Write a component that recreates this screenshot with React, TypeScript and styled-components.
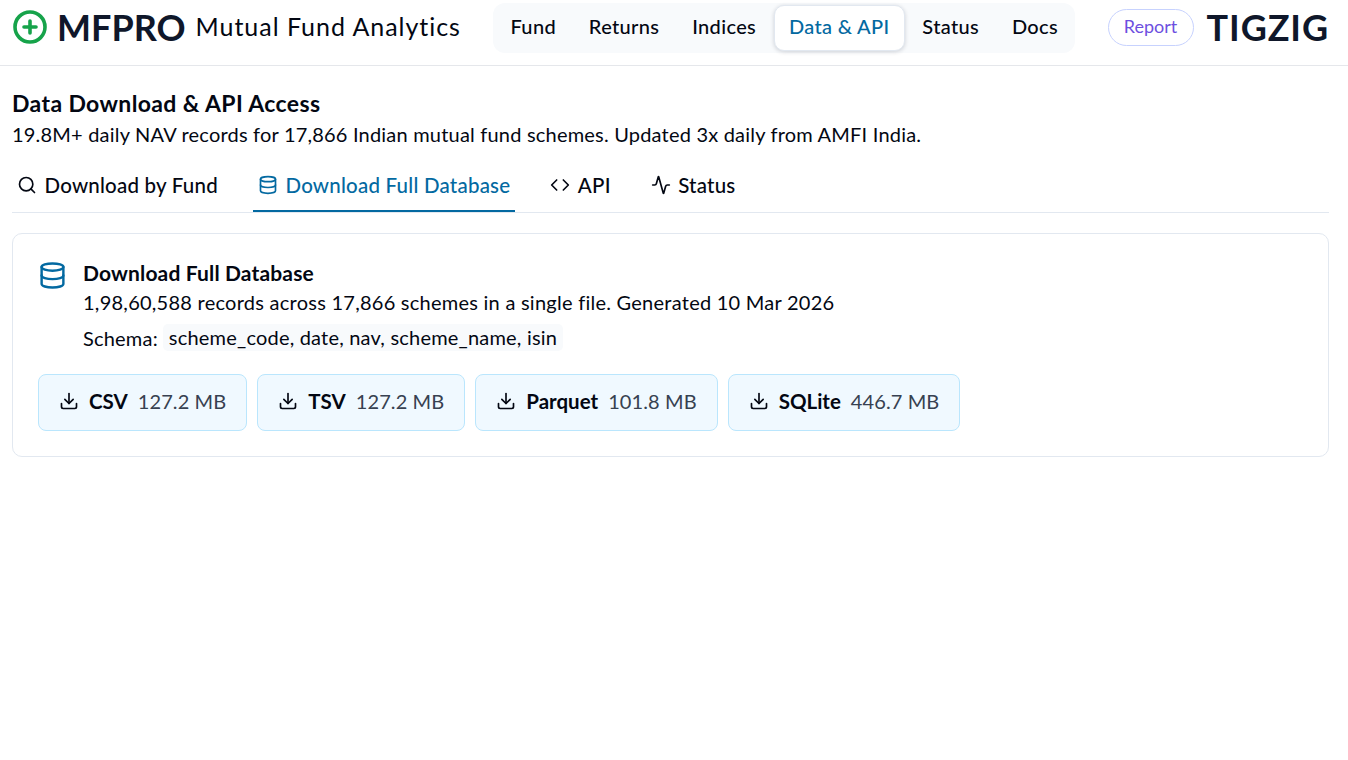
import { createGlobalStyle, styled } from "styled-components";
import { CirclePlus, Code, Activity, Database, Download, Search } from "lucide-react";

const GlobalStyle = createGlobalStyle`
  body {
    margin: 0;
    background: #fff;
    color: #030712;
    font-family: "Lato", "Open Sans", sans-serif;
  }
`;

const Header = styled.header`
  height: 66px;
  box-sizing: border-box;
  border-bottom: 1px solid #e5e7eb;
  display: flex;
  align-items: center;
  justify-content: space-between;
  padding: 0 19px 11px 12px;
`;

const Brand = styled.div`
  display: flex;
  align-items: center;
`;

const BrandIcon = styled(CirclePlus)`
  width: 36px;
  height: 36px;
  color: #16a34a;
  margin-right: 9px;
`;

const BrandName = styled.span`
  font-size: 36px;
  font-weight: 700;
  color: #0f172a;
  margin-right: 10px;
`;

const BrandTag = styled.span`
  font-size: 25px;
  letter-spacing: 0.97px;
  padding-bottom: 2px;
  color: #030712;
`;

const Nav = styled.nav`
  display: flex;
  align-items: center;
  gap: 2px;
  height: 50px;
  padding: 0 2px;
  margin-top: 2px;
  background: #f8fafc;
  border-radius: 12px;
`;

const NavItem = styled.a<{ $active?: boolean }>`
  height: 46px;
  box-sizing: border-box;
  display: flex;
  align-items: center;
  padding: 0 14.4px 4px;
  font-size: 20px;
  font-weight: 500;
  letter-spacing: 0.35px;
  border-radius: 10px;
  color: ${(p) => (p.$active ? "#0369a1" : "#030712")};
  background: ${(p) => (p.$active ? "#fff" : "transparent")};
  border: 1px solid ${(p) => (p.$active ? "#e2e8f0" : "transparent")};
  box-shadow: ${(p) => (p.$active ? "0 1px 4px rgba(15, 23, 42, 0.18)" : "none")};
`;

const RightGroup = styled.div`
  display: flex;
  align-items: center;
  gap: 13px;
`;

const ReportButton = styled.a`
  height: 37px;
  width: 86px;
  box-sizing: border-box;
  border: 1px solid #c7d2fe;
  border-radius: 19px;
  display: flex;
  align-items: center;
  justify-content: center;
  padding-bottom: 2px;
  font-size: 18px;
  color: #6d4fe0;
`;

const TigzigLogo = styled.span`
  font-size: 36px;
  font-weight: 700;
  letter-spacing: 0.9px;
  color: #0f172a;
`;

const Main = styled.main`
  padding: 23px 19px 0 12px;
`;

const PageTitle = styled.h1`
  margin: 0;
  font-size: 23px;
  line-height: 28px;
  font-weight: 700;
  letter-spacing: 0.37px;
  color: #030712;
`;

const PageSub = styled.p`
  margin: 3px 0 0;
  font-size: 20px;
  line-height: 28px;
  letter-spacing: 0.2px;
`;

const Tabs = styled.div`
  display: flex;
  margin-top: 14px;
  height: 50px;
  border-bottom: 1px solid #e2e8f0;
`;

const Tab = styled.a<{ $active?: boolean }>`
  display: flex;
  align-items: center;
  gap: 7.5px;
  padding: 0 5px 2px;
  margin-right: 30px;
  height: 50px;
  box-sizing: border-box;
  font-size: 20.5px;
  font-weight: 500;
  letter-spacing: 0.22px;
  color: ${(p) => (p.$active ? "#0369a1" : "#030712")};
  border-bottom: 2px solid ${(p) => (p.$active ? "#0369a1" : "transparent")};
  svg {
    width: 20px;
    height: 20px;
  }
`;

const Card = styled.section`
  margin-top: 20px;
  height: 224px;
  box-sizing: border-box;
  border: 1px solid #e2e8f0;
  border-radius: 10px;
  padding: 25px 25px;
`;

const CardHead = styled.div`
  display: flex;
  gap: 16px;
`;

const CardIcon = styled(Database)`
  width: 29px;
  height: 29px;
  color: #0369a1;
  flex: none;
  margin-top: 2px;
`;

const CardTitle = styled.div`
  font-size: 21px;
  line-height: 28px;
  font-weight: 700;
  letter-spacing: 0.15px;
`;

const CardLine = styled.div`
  font-size: 20px;
  line-height: 31px;
  letter-spacing: 0.25px;
`;

const SchemaLine = styled.div`
  display: flex;
  align-items: center;
  gap: 5px;
  margin-top: 6px;
  font-size: 20px;
  letter-spacing: 0.2px;
`;

const SchemaCode = styled.span`
  background: #f8fafc;
  border-radius: 5px;
  padding: 0 6px;
  line-height: 27px;
`;

const DownloadRow = styled.div`
  display: flex;
  gap: 10px;
  margin-top: 23px;
`;

const DownloadButton = styled.a`
  height: 57px;
  box-sizing: border-box;
  display: flex;
  align-items: center;
  padding: 0 20px 3px;
  background: #f0f9ff;
  border: 1px solid #bae6fd;
  border-radius: 8px;
  svg {
    width: 20px;
    height: 20px;
    margin-right: 10px;
  }
`;

const FormatName = styled.span`
  font-size: 20.5px;
  font-weight: 700;
  margin-right: 10px;
`;

const FormatSize = styled.span`
  font-size: 20px;
  letter-spacing: 0.1px;
  color: #374151;
`;

const downloads = [
  { name: "CSV", size: "127.2 MB" },
  { name: "TSV", size: "127.2 MB" },
  { name: "Parquet", size: "101.8 MB" },
  { name: "SQLite", size: "446.7 MB" },
];

export default function App() {
  return (
    <>
      <GlobalStyle />
      <Header>
        <Brand>
          <BrandIcon strokeWidth={2.4} />
          <BrandName>MFPRO</BrandName>
          <BrandTag>Mutual Fund Analytics</BrandTag>
        </Brand>
        <Nav>
          <NavItem>Fund</NavItem>
          <NavItem>Returns</NavItem>
          <NavItem>Indices</NavItem>
          <NavItem $active>Data &amp; API</NavItem>
          <NavItem>Status</NavItem>
          <NavItem>Docs</NavItem>
        </Nav>
        <RightGroup>
          <ReportButton>Report</ReportButton>
          <TigzigLogo>TIGZIG</TigzigLogo>
        </RightGroup>
      </Header>
      <Main>
        <PageTitle>Data Download &amp; API Access</PageTitle>
        <PageSub>19.8M+ daily NAV records for 17,866 Indian mutual fund schemes. Updated 3x daily from AMFI India.</PageSub>
        <Tabs>
          <Tab><Search />Download by Fund</Tab>
          <Tab $active><Database />Download Full Database</Tab>
          <Tab><Code />API</Tab>
          <Tab><Activity />Status</Tab>
        </Tabs>
        <Card>
          <CardHead>
            <CardIcon />
            <div>
              <CardTitle>Download Full Database</CardTitle>
              <CardLine>1,98,60,588 records across 17,866 schemes in a single file. Generated 10 Mar 2026</CardLine>
              <SchemaLine>
                Schema:
                <SchemaCode>scheme_code, date, nav, scheme_name, isin</SchemaCode>
              </SchemaLine>
            </div>
          </CardHead>
          <DownloadRow>
            {downloads.map((d) => (
              <DownloadButton key={d.name}>
                <Download />
                <FormatName>{d.name}</FormatName>
                <FormatSize>{d.size}</FormatSize>
              </DownloadButton>
            ))}
          </DownloadRow>
        </Card>
      </Main>
    </>
  );
}
